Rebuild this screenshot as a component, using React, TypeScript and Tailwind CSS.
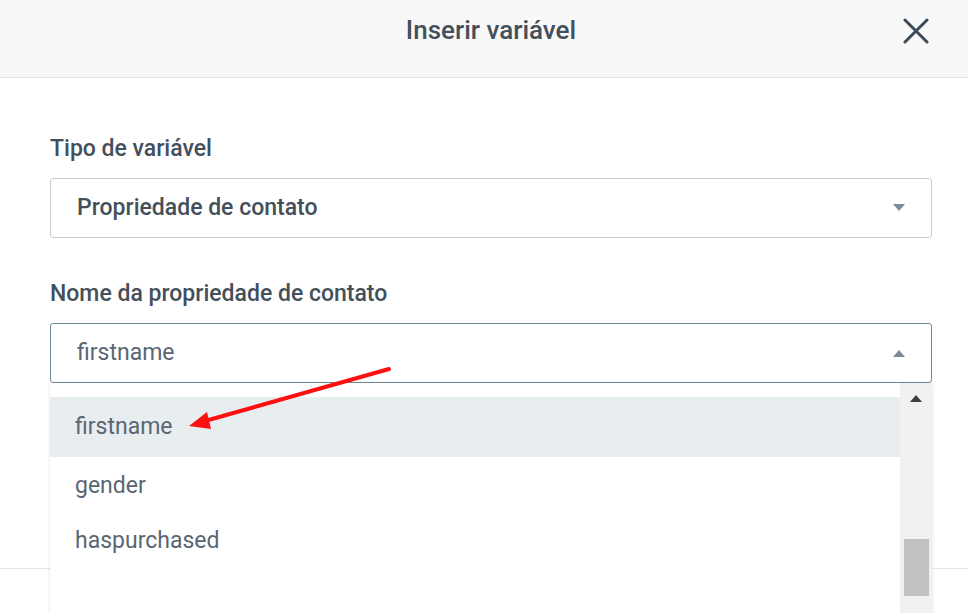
import React from "react";

const items = [
  { label: "firstname", h: "h-[60px]", active: true },
  { label: "gender", h: "h-[58px]", active: false },
  { label: "haspurchased", h: "h-[52px]", active: false },
];

const Caret = ({ up }: { up?: boolean }) => (
  <svg width="12" height="8" viewBox="0 0 12 8" className="text-[#7c8a96]">
    {up ? <path d="M0 8 L6 1 L12 8 Z" fill="currentColor" /> : <path d="M0 0 L12 0 L6 7 Z" fill="currentColor" />}
  </svg>
);

const App = () => {
  return (
    <div
      className="relative w-[968px] h-[613px] overflow-hidden bg-white text-[#33475b]"
      style={{ fontFamily: "Roboto, 'Liberation Sans', sans-serif" }}
    >
      <header className="relative flex items-center justify-center h-[78px] bg-[#f8f8f8] border-b border-[#e6e6e6]">
        <h1 className="text-[26px] font-medium text-[#434f5a] -mt-[16px] ml-[14px]">Inserir variável</h1>
        <button className="absolute right-[38px] top-[17px] w-[28px] h-[28px] flex items-center justify-center">
          <svg width="26" height="26" viewBox="0 0 26 26">
            <path d="M2 2 L24 24 M24 2 L2 24" stroke="#3a4a58" strokeWidth="3" strokeLinecap="round" />
          </svg>
        </button>
      </header>

      <main className="px-[50px] pr-[36px] pt-[56px]">
        <label className="block text-[23px] font-medium leading-[30px] text-[#434f5a]">Tipo de variável</label>
        <div className="mt-[14px] flex items-center justify-between h-[60px] border border-[#c5ccd2] rounded-[3px] pl-[26px] pr-[26px]">
          <span className="text-[23px] font-medium text-[#434f5a]">Propriedade de contato</span>
          <Caret />
        </div>

        <label className="block mt-[41px] text-[23px] font-medium leading-[30px] text-[#434f5a]">
          Nome da propriedade de contato
        </label>
        <div className="mt-[14px] flex items-center justify-between h-[60px] border border-[#6e8a93] rounded-[3px] pl-[26px] pr-[26px]">
          <span className="text-[23px] text-[#5a6671]">firstname</span>
          <Caret up />
        </div>

        <div className="mt-[76px] h-[58px] border border-[#cdd5dc] rounded-[3px]" />
      </main>

      <footer className="absolute left-0 right-0 top-[568px] h-[60px] border-t border-[#e6e6e6] bg-white">
        <div className="ml-auto mr-[36px] w-[1px] h-full bg-[#d4d4d4]" />
      </footer>

      {/* open dropdown menu */}
      <div className="absolute left-[50px] top-[383px] w-[882px] h-[240px] bg-white shadow-[0_1px_4px_rgba(0,0,0,0.12)] flex">
        <ul className="flex-1 pt-[14px]">
          {items.map((it) => (
            <li
              key={it.label}
              className={`${it.h} flex items-center pl-[25px] text-[23px] text-[#5a6671] ${it.active ? "bg-[#e8edef]" : ""}`}
            >
              {it.label}
            </li>
          ))}
        </ul>
        <div className="w-[32px] bg-[#f1f1f1] flex flex-col items-center pt-[11px]">
          <svg width="12" height="8" viewBox="0 0 12 8">
            <path d="M0 8 L6 1 L12 8 Z" fill="#404040" />
          </svg>
          <div className="mt-[137px] w-[25px] h-[57px] bg-[#c1c1c1]" />
        </div>
      </div>

      {/* red annotation arrow */}
      <svg className="absolute left-0 top-0 pointer-events-none" width="968" height="613">
        <line x1="389" y1="369" x2="205" y2="421" stroke="#ff1010" strokeWidth="4" strokeLinecap="round" />
        <path d="M189 426 L207 412 L211 429 Z" fill="#ff1010" />
      </svg>
    </div>
  );
};

export default App;
